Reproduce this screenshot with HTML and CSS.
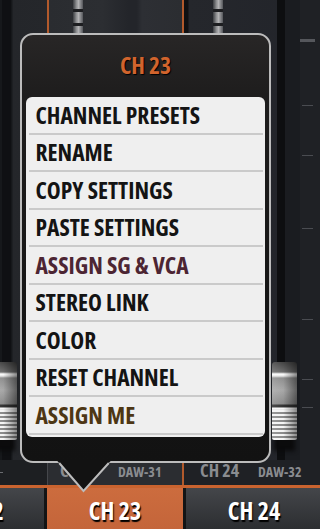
FILE: index.html
```html
<!DOCTYPE html>
<html>
<head>
<meta charset="utf-8">
<title>Channel menu</title>
<link rel="stylesheet" href="styles.css">
</head>
<body>
<div class="mixer">
  <div class="strips">
    <div class="strip strip-prev">
      <div class="slot"></div>
      <div class="knob knob-prev"></div>
    </div>
    <div class="strip strip-sel">
      <div class="meter"></div>
    </div>
    <div class="strip strip-next">
      <div class="meter"></div>
      <div class="slot slot-next"></div>
      <div class="rail"></div>
      <div class="scale">
        <span class="tick tick-major" style="top:39px"></span>
        <span class="tick" style="top:105px"></span>
        <span class="tick" style="top:155px"></span>
        <span class="tick" style="top:228px"></span>
        <span class="tick" style="top:319px"></span>
        <span class="tick" style="top:379px"></span>
        <span class="tick" style="top:407px"></span>
      </div>
      <div class="knob knob-next"></div>
    </div>
  </div>
  <div class="labels">
    <div class="lab lab-prev"><span class="dash"></span></div>
    <div class="lab lab-sel"><span class="lab-name">CH 23</span><span class="lab-daw">DAW-31</span></div>
    <div class="lab lab-next"><span class="lab-name">CH 24</span><span class="lab-daw">DAW-32</span></div>
  </div>
  <div class="rule"></div>
  <div class="names">
    <div class="name name-prev">CH 22</div>
    <div class="name name-sel">CH 23</div>
    <div class="name name-next">CH 24</div>
  </div>

  <div class="popup">
    <div class="popup-title">CH 23</div>
    <ul class="menu">
      <li>CHANNEL PRESETS</li>
      <li>RENAME</li>
      <li>COPY SETTINGS</li>
      <li>PASTE SETTINGS</li>
      <li class="item-assign">ASSIGN SG &amp; VCA</li>
      <li>STEREO LINK</li>
      <li>COLOR</li>
      <li>RESET CHANNEL</li>
      <li class="item-me">ASSIGN ME</li>
    </ul>
  </div>
  <svg class="pointer" width="56" height="34" viewBox="0 0 56 34">
    <polygon points="0.5,0 27.5,31 55.5,0" fill="#121212"/>
    <polyline points="3.2,3 27.5,31 52.8,3" fill="none" stroke="#bcbcbc" stroke-width="2"/>
  </svg>
</div>
</body>
</html>
```

FILE: styles.css
```css
* { box-sizing: border-box; margin: 0; padding: 0; }

html, body { width: 320px; height: 529px; overflow: hidden; }

body {
  background: #1a1c1f;
  font-family: "Open Sans", "Liberation Sans", sans-serif;
  font-stretch: 75%;
  font-weight: 700;
}

.mixer {
  position: relative;
  width: 320px;
  height: 529px;
  display: flex;
  flex-direction: column;
  overflow: hidden;
}

/* ---------- channel strips ---------- */
.strips { display: flex; height: 460px; }
.strip { position: relative; height: 100%; display: flex; }

.strip-prev {
  width: 47px;
  padding-left: 2px;
  background: linear-gradient(to right, #16181b 0, #16181b 12px, #24262a 13px, #25272b 100%);
}
.slot { width: 9px; height: 100%; background: #0f1013; }

.strip-sel {
  width: 137px;
  padding-left: 24px;
  border-left: 2px solid #b25a2c;
  border-right: 2px solid #b25a2c;
  background: linear-gradient(to right, #2a2c30 0, #2c2e32 40%, #23252a 60%, #23252a 66%, #2d2f34 70%, #2b2d31 100%);
}

.meter {
  width: 10px;
  height: 100%;
  background:
    repeating-linear-gradient(to bottom, transparent 0 9px, #1d1e21 9px 12px, transparent 12px 14px),
    linear-gradient(to right, #3c3e42, #8f9092 35%, #b2b2b4 55%, #54565a);
}

.strip-next {
  flex: 1;
  padding-left: 29px;
  background: linear-gradient(to right, #0f1012 0, #0f1012 4px, #25272c 5px, #22242a 100%);
}
.slot-next { width: 8px; margin-left: 54px; background: #0d0e10; }
.rail { width: 15px; height: 100%; background: #1a1c20; }
.scale { flex: 1; position: relative; background: #1f2125; }
.tick {
  position: absolute;
  left: 2px;
  width: 11px;
  height: 1px;
  background: #4a4c51;
}
.tick-major { left: 0; width: 15px; height: 3px; background: #55575c; }

.knob {
  position: absolute;
  top: 362px;
  width: 25px;
  height: 78px;
  border-radius: 3px 3px 2px 2px;
  background:
    linear-gradient(to right, rgba(255,255,255,.12), rgba(0,0,0,0) 45%, rgba(0,0,0,.45) 100%),
    linear-gradient(to bottom, #444 0, #6c6c6c 10px, #ffffff 12px, #e6e6e6 14px, #8e8e8e 16px,
      #a8a8a8 28px, #8a8a8a 42px, #333 43px, #333 45px, #ffffff 46px, #e2e2e2 48px, transparent 48px),
    repeating-linear-gradient(to bottom, #f4f4f4 0 2px, #8a8a8a 2px 4px);
  box-shadow: 0 13px 4px -2px #0b0b0c;
}
.knob-prev { left: -8px; }
.knob-next { left: 88px; }

/* ---------- label row ---------- */
.labels { display: flex; height: 25px; color: #8a8c90; }
.lab { display: flex; align-items: baseline; height: 100%; line-height: 20px; }
.lab-prev { width: 48px; align-items: center; background: #1d1f22; border-right: 1px solid #45474b; }
.dash { width: 3px; height: 1px; background: #6a6c70; }
.lab-sel {
  width: 136px;
  padding-left: 12px;
  background: #2b2d31;
  border-right: 2px solid #b25a2c;
}
.lab-next { flex: 1; padding-left: 16px; background: #1f2125; }
.lab-name { width: 58px; font-size: 18px; }
.lab-daw { font-size: 14px; }

.rule { height: 3px; background: #c9632f; }

/* ---------- channel name buttons ---------- */
.names { display: flex; gap: 3px; height: 41px; background: #131415; }
.name {
  flex: none;
  display: flex;
  align-items: center;
  justify-content: center;
  padding-top: 4px;
  color: #ffffff;
  font-size: 24px;
  text-shadow: 1px 2px 1px #000;
}
.name-prev { width: 133px; margin-left: -89px; background: linear-gradient(#44464a, #2c2e31); }
.name-sel { width: 136px; background: linear-gradient(#cc6c3e, #c4653a); }
.name-next { width: 136px; background: linear-gradient(#44464a, #2c2e31); }

/* ---------- popup ---------- */
.popup {
  position: absolute;
  left: 20px;
  top: 33px;
  width: 251px;
  height: 430px;
  padding: 0 4px;
  border: 2px solid #bcbcbc;
  border-radius: 13px;
  background: linear-gradient(to bottom, #282626 0, #1e1d1d 60px, #151515 70%, #121212 100%);
  display: flex;
  flex-direction: column;
}
.popup-title {
  height: 62px;
  display: flex;
  align-items: center;
  justify-content: center;
  padding-bottom: 2px;
  color: #d1642d;
  font-size: 23.5px;
  text-shadow: 1px 1px 1px #000;
}
.menu {
  list-style: none;
  background: #efefef;
  border-radius: 6px;
  padding: 0 2.5px 2px;
}
.menu li {
  height: 37.5px;
  display: flex;
  align-items: center;
  padding-left: 7px;
  border-bottom: 2px solid #cacaca;
  color: #141414;
  font-size: 23.5px;
}
.menu .item-assign { color: #4c2533; }
.menu .item-me { color: #4d3614; }

.pointer { position: absolute; left: 56px; top: 460px; }
```
